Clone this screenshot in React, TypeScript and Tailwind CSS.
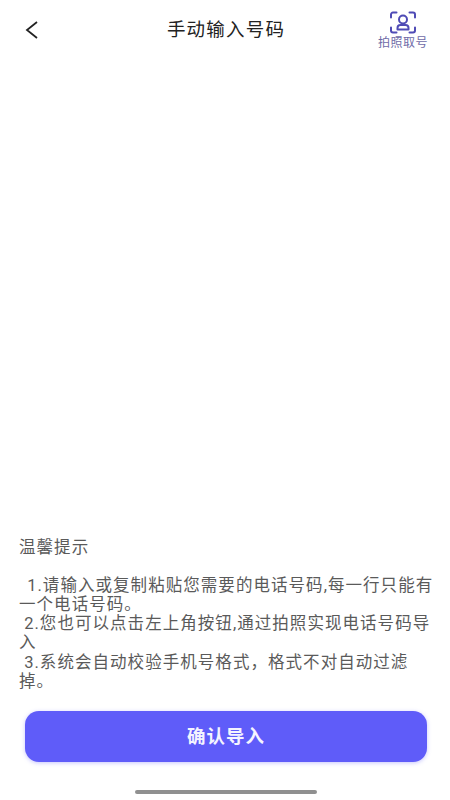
const FONT = "font-['Roboto','Noto_Sans_CJK_SC',sans-serif]";

function ScanIcon() {
  return (
    <svg width="28" height="23" viewBox="0 0 28 23" fill="none" stroke="#4f4bb5" strokeWidth="2" strokeLinecap="round">
      <path d="M2 6.5V3.5A2 2 0 0 1 4 1.5H7.5" />
      <path d="M20.5 1.5H24A2 2 0 0 1 26 3.5V6.5" />
      <path d="M2 16.5V19.5A2 2 0 0 0 4 21.5H7.5" />
      <path d="M20.5 21.5H24A2 2 0 0 0 26 19.5V16.5" />
      <circle cx="14" cy="8.5" r="4" />
      <path d="M8.5 18.5V17A3 3 0 0 1 11.5 14H16.5A3 3 0 0 1 19.5 17V18.5Z" strokeLinejoin="round" />
    </svg>
  );
}

export default function App() {
  return (
    <div className={`flex h-[800px] w-[450px] flex-col overflow-hidden bg-white ${FONT}`}>
      {/* header */}
      <div className="flex h-[60px] items-start justify-between pl-[25px] pr-[22px]">
        <svg className="mt-[21px]" width="13" height="18" viewBox="0 0 13 18" fill="none" stroke="#222222" strokeWidth="1.8">
          <path d="M12 1L2 9L12 17" />
        </svg>
        <div className="mt-[20px] ml-[36px] text-[18.5px] leading-[20px] tracking-[1.2px] text-[#222222]">手动输入号码</div>
        <div className="flex w-[50px] flex-col items-center pt-[11px]">
          <ScanIcon />
          <div className="mt-[3px] whitespace-nowrap text-[12px] leading-[13px] tracking-[0.5px] text-[#6f6ba8]">拍照取号</div>
        </div>
      </div>

      <div className="flex-1" />

      {/* tips */}
      <div className="w-[435px] pl-[19px] text-[16.5px] leading-[19.2px] tracking-[1.05px] text-[#5a5a5a]">
        <div>温馨提示</div>
        <div className="mt-[19px] indent-[3px]">&nbsp;1.请输入或复制粘贴您需要的电话号码,每一行只能有一个电话号码。</div>
        <div>&nbsp;2.您也可以点击左上角按钮,通过拍照实现电话号码导入</div>
        <div>&nbsp;3.系统会自动校验手机号格式，格式不对自动过滤掉。</div>
      </div>

      {/* confirm */}
      <div className="mt-[20px] pl-[25px] pr-[23px]">
        <button className="flex h-[51px] w-full items-center justify-center rounded-[14px] bg-[#5f5cf9] pt-[3px] text-[18.5px] font-bold tracking-[1px] text-[#f4f4ff] shadow-[0_1px_4px_rgba(95,92,249,0.35)]">
          确认导入
        </button>
      </div>

      {/* home bar */}
      <div className="flex h-[38px] justify-center pt-[28px]">
        <div className="ml-[2px] h-[4px] w-[182px] rounded-full bg-[#909090]" />
      </div>
    </div>
  );
}
